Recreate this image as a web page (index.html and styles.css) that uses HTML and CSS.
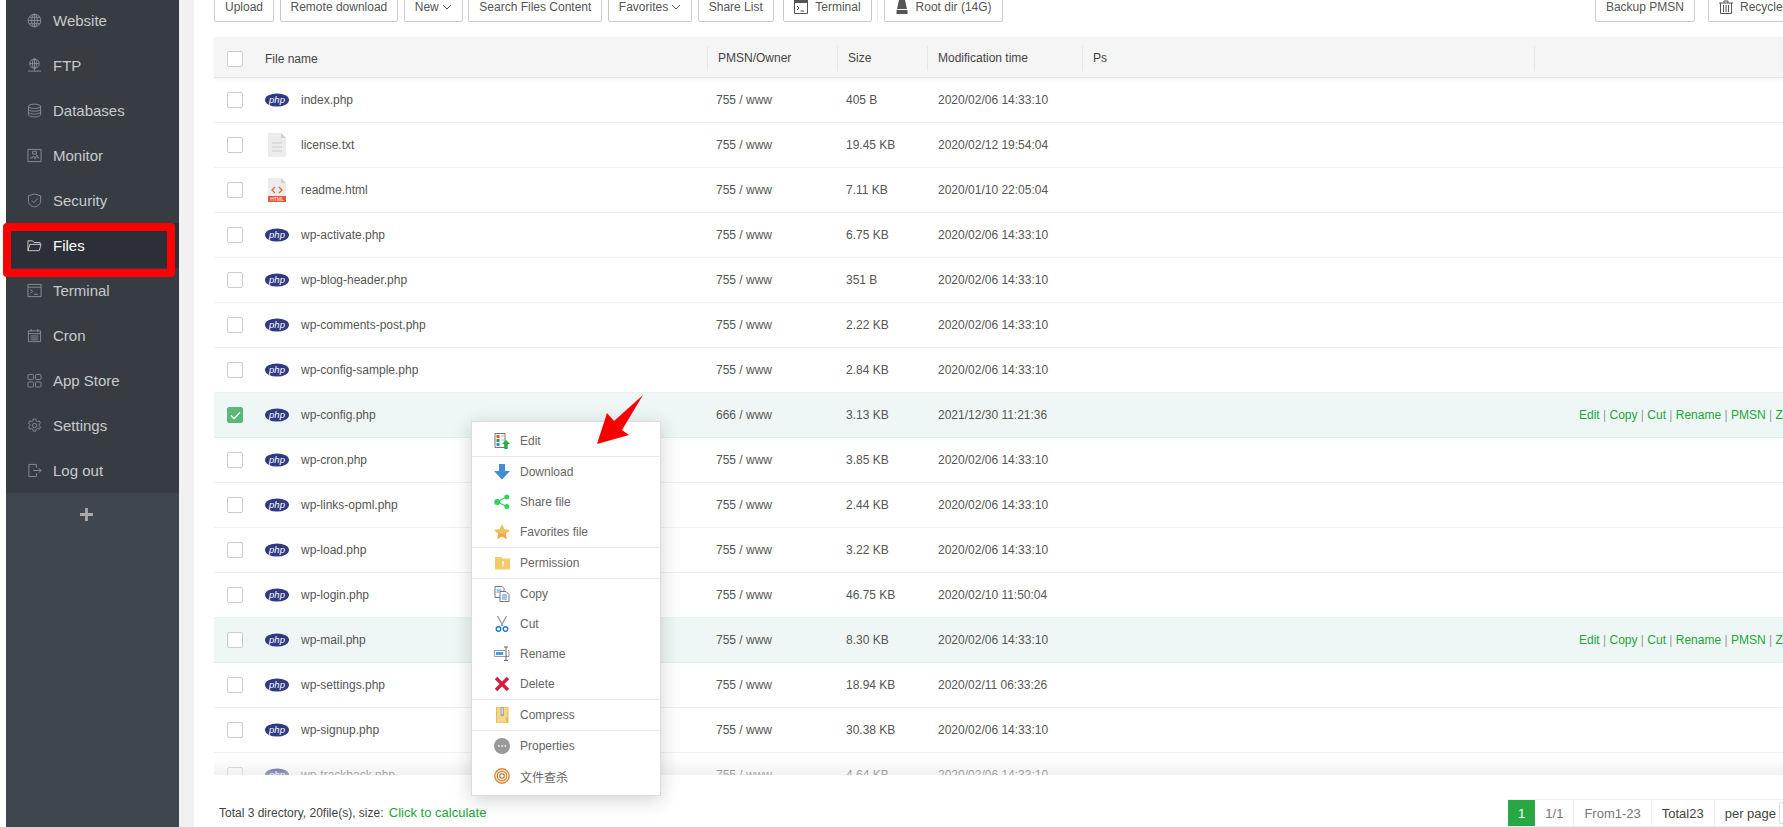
FILE: index.html
```html
<!DOCTYPE html>
<html lang="en">
<head>
<meta charset="utf-8">
<title>Files</title>
<link rel="stylesheet" href="styles.css">
</head>
<body>
<svg class="sprite" aria-hidden="true">
  <symbol id="php" viewBox="0 0 24 14">
    <ellipse cx="12" cy="7" rx="12" ry="6.6" fill="#2f3a80"/>
    <text x="12" y="10" text-anchor="middle" font-family="Liberation Sans" font-size="9.5" font-style="italic" fill="#fff">php</text>
  </symbol>
  <symbol id="txt" viewBox="0 0 18 24">
    <path d="M0 0h13l5 5v19H0z" fill="#ececec"/><path d="M13 0l5 5h-5z" fill="#cfcfcf"/>
    <path d="M4 10h10M4 14h10M4 18h10" stroke="#d6d6d6" stroke-width="1.3"/>
  </symbol>
  <symbol id="html" viewBox="0 0 18 24">
    <path d="M0 0h13l5 5v19H0z" fill="#ececec"/><path d="M13 0l5 5h-5z" fill="#cfcfcf"/>
    <path d="M7 9l-3 3 3 3M11 9l3 3-3 3" fill="none" stroke="#e8643c" stroke-width="1.3"/>
    <path d="M0 18h18v6H0z" fill="#e8553a"/>
    <text x="9" y="23" text-anchor="middle" font-family="Liberation Sans" font-size="5" fill="#fff">HTML</text>
  </symbol>
</svg>

<div class="gutter"></div>

<nav class="sidebar">
  <ul class="menu">
    <li class="menu-item"><svg class="nav-ico" viewBox="0 0 16 16"><circle cx="8" cy="8" r="6.7"/><ellipse cx="8" cy="8" rx="3" ry="6.7"/><path d="M1.3 8h13.4M2.3 4.600h11.400M2.300 11.400h11.400M8 1.300v13.400"/></svg>Website</li>
    <li class="menu-item"><svg class="nav-ico" viewBox="0 0 16 16"><circle cx="8" cy="6" r="5"/><ellipse cx="8" cy="6" rx="2.2" ry="5"/><path d="M3 6h10M8 1v10M8 11v2.500M1 14h14"/></svg>FTP</li>
    <li class="menu-item"><svg class="nav-ico" viewBox="0 0 16 16"><ellipse cx="8" cy="3.500" rx="6.500" ry="2.300"/><path d="M1.500 3.500v9c0 1.300 2.900 2.300 6.500 2.300s6.500-1 6.500-2.300v-9M1.500 6.500c0 1.300 2.900 2.300 6.500 2.300s6.500-1 6.500-2.300M1.500 9.500c0 1.300 2.900 2.300 6.500 2.300s6.500-1 6.500-2.300"/></svg>Databases</li>
    <li class="menu-item"><svg class="nav-ico" viewBox="0 0 16 16"><path d="M1 1.500h14v13H1zM3 10.500h2.500l1.500-2 1.500 3 2-4 1 3H13M6 3.500h4v3H6z"/></svg>Monitor</li>
    <li class="menu-item"><svg class="nav-ico" viewBox="0 0 16 16"><path d="M8 1l6.500 2v6c0 3-3 5-6.500 6-3.500-1-6.500-3-6.500-6V3zM5 8l2.300 2.300L11.300 6"/></svg>Security</li>
    <li class="menu-item menu-active"><svg class="nav-ico nav-ico-on" viewBox="0 0 16 16"><path d="M1 13.500V3h5l1.500 1.800H14v2M1 13.500l2-6.700h12l-2 6.700z"/></svg>Files</li>
    <li class="menu-item"><svg class="nav-ico" viewBox="0 0 16 16"><path d="M1 1.500h14v13H1zM1 4.500h14M3.500 7l2.500 2-2.500 2M7.500 12h4"/></svg>Terminal</li>
    <li class="menu-item"><svg class="nav-ico" viewBox="0 0 16 16"><path d="M1.500 3h13v11.500h-13zM1.500 6h13M4.500 1v3M11.500 1v3M4 8.500h8M4 10.500h8M4 12.500h8"/></svg>Cron</li>
    <li class="menu-item"><svg class="nav-ico" viewBox="0 0 16 16"><rect x="1" y="1.500" width="6" height="5.500" rx="1.300"/><rect x="9" y="1.500" width="6" height="5.500" rx="1.300"/><rect x="1" y="9.500" width="6" height="5.500" rx="1.300"/><rect x="9" y="9.500" width="6" height="5.500" rx="1.300"/></svg>App Store</li>
    <li class="menu-item"><svg class="nav-ico" viewBox="0 0 16 16"><circle cx="8" cy="8" r="2.300"/><path d="M6.700 1h2.600l.4 2 1.500.8 1.900-.7 1.300 2.300-1.500 1.300v1.600l1.500 1.300-1.300 2.300-1.900-.7-1.500.8-.4 2H6.700l-.4-2-1.500-.8-1.900.7-1.300-2.300 1.500-1.300V7.100L1.600 5.400l1.300-2.300 1.900.7 1.500-.8z"/></svg>Settings</li>
    <li class="menu-item"><svg class="nav-ico" viewBox="0 0 16 16"><path d="M10 1.500H2v13h8M10 5v-3.500M10 14.500V11M6.500 8H15M12.500 5.500L15 8l-2.500 2.500"/></svg>Log out</li>
  </ul>
  <div class="add-row">
    <svg class="add-ico" viewBox="0 0 14 14"><path d="M0 7h14M7 0v14"/></svg>
  </div>
</nav>

<main class="content">
  <section class="panel">
    <div class="toolbar">
      <button class="btn">Upload</button>
      <button class="btn">Remote download</button>
      <button class="btn">New <svg class="caret" viewBox="0 0 10 6"><path d="M1 1l4 4 4-4"/></svg></button>
      <button class="btn">Search Files Content</button>
      <button class="btn">Favorites <svg class="caret" viewBox="0 0 10 6"><path d="M1 1l4 4 4-4"/></svg></button>
      <button class="btn">Share List</button>
      <button class="btn btn-term"><svg class="btn-ico" viewBox="0 0 14 14"><path class="ico-fill" d="M0 0h14v3H0z"/><path class="ico-line" d="M.5 3v10.500h13V3M3 6l2 2-2 2M6.500 11H10"/></svg>Terminal</button>
      <span class="tool-sep"></span>
      <button class="btn"><svg class="btn-ico" viewBox="0 0 14 14"><path class="ico-fill" d="M4 0h6l2 9H2zM1.500 10h11v4h-11z"/></svg>Root dir (14G)</button>
      <button class="btn btn-right">Backup PMSN</button>
      <button class="btn btn-recycle"><svg class="btn-ico" viewBox="0 0 14 14"><path class="ico-line" d="M0 3h14M5 3V1h4v2M1.500 3v10.500h11V3M4.500 5v7M7 5v7M9.500 5v7"/></svg>Recycle bin</button>
    </div>

    <div class="thead">
      <div class="cell-check"><span class="check"></span></div>
      <div class="th-name">File name</div>
      <div class="th">PMSN/Owner</div>
      <div class="th">Size</div>
      <div class="th">Modification time</div>
      <div class="th">Ps</div>
      <div class="th"></div>
    </div>

    <div class="tbody">
      <div class="row"><div class="cell-check"><span class="check"></span></div><div class="name"><svg class="ficon"><use href="#php"/></svg>index.php</div><div class="td">755 / www</div><div class="td">405 B</div><div class="td td-date">2020/02/06 14:33:10</div><div class="td"></div><div class="td"></div></div>
      <div class="row"><div class="cell-check"><span class="check"></span></div><div class="name"><svg class="ficon"><use href="#txt"/></svg>license.txt</div><div class="td">755 / www</div><div class="td">19.45 KB</div><div class="td td-date">2020/02/12 19:54:04</div><div class="td"></div><div class="td"></div></div>
      <div class="row"><div class="cell-check"><span class="check"></span></div><div class="name"><svg class="ficon"><use href="#html"/></svg>readme.html</div><div class="td">755 / www</div><div class="td">7.11 KB</div><div class="td td-date">2020/01/10 22:05:04</div><div class="td"></div><div class="td"></div></div>
      <div class="row"><div class="cell-check"><span class="check"></span></div><div class="name"><svg class="ficon"><use href="#php"/></svg>wp-activate.php</div><div class="td">755 / www</div><div class="td">6.75 KB</div><div class="td td-date">2020/02/06 14:33:10</div><div class="td"></div><div class="td"></div></div>
      <div class="row"><div class="cell-check"><span class="check"></span></div><div class="name"><svg class="ficon"><use href="#php"/></svg>wp-blog-header.php</div><div class="td">755 / www</div><div class="td">351 B</div><div class="td td-date">2020/02/06 14:33:10</div><div class="td"></div><div class="td"></div></div>
      <div class="row"><div class="cell-check"><span class="check"></span></div><div class="name"><svg class="ficon"><use href="#php"/></svg>wp-comments-post.php</div><div class="td">755 / www</div><div class="td">2.22 KB</div><div class="td td-date">2020/02/06 14:33:10</div><div class="td"></div><div class="td"></div></div>
      <div class="row"><div class="cell-check"><span class="check"></span></div><div class="name"><svg class="ficon"><use href="#php"/></svg>wp-config-sample.php</div><div class="td">755 / www</div><div class="td">2.84 KB</div><div class="td td-date">2020/02/06 14:33:10</div><div class="td"></div><div class="td"></div></div>
      <div class="row row-on"><div class="cell-check"><span class="check check-on"><svg class="tick" viewBox="0 0 12 10"><path d="M1 5l3.500 3.500L11 1.500"/></svg></span></div><div class="name"><svg class="ficon"><use href="#php"/></svg>wp-config.php</div><div class="td">666 / www</div><div class="td">3.13 KB</div><div class="td td-date">2021/12/30 11:21:36</div><div class="td"></div><div class="acts"><a>Edit</a> | <a>Copy</a> | <a>Cut</a> | <a>Rename</a> | <a>PMSN</a> | <a>Zip</a></div></div>
      <div class="row"><div class="cell-check"><span class="check"></span></div><div class="name"><svg class="ficon"><use href="#php"/></svg>wp-cron.php</div><div class="td">755 / www</div><div class="td">3.85 KB</div><div class="td td-date">2020/02/06 14:33:10</div><div class="td"></div><div class="td"></div></div>
      <div class="row"><div class="cell-check"><span class="check"></span></div><div class="name"><svg class="ficon"><use href="#php"/></svg>wp-links-opml.php</div><div class="td">755 / www</div><div class="td">2.44 KB</div><div class="td td-date">2020/02/06 14:33:10</div><div class="td"></div><div class="td"></div></div>
      <div class="row"><div class="cell-check"><span class="check"></span></div><div class="name"><svg class="ficon"><use href="#php"/></svg>wp-load.php</div><div class="td">755 / www</div><div class="td">3.22 KB</div><div class="td td-date">2020/02/06 14:33:10</div><div class="td"></div><div class="td"></div></div>
      <div class="row"><div class="cell-check"><span class="check"></span></div><div class="name"><svg class="ficon"><use href="#php"/></svg>wp-login.php</div><div class="td">755 / www</div><div class="td">46.75 KB</div><div class="td td-date">2020/02/10 11:50:04</div><div class="td"></div><div class="td"></div></div>
      <div class="row row-on"><div class="cell-check"><span class="check"></span></div><div class="name"><svg class="ficon"><use href="#php"/></svg>wp-mail.php</div><div class="td">755 / www</div><div class="td">8.30 KB</div><div class="td td-date">2020/02/06 14:33:10</div><div class="td"></div><div class="acts"><a>Edit</a> | <a>Copy</a> | <a>Cut</a> | <a>Rename</a> | <a>PMSN</a> | <a>Zip</a></div></div>
      <div class="row"><div class="cell-check"><span class="check"></span></div><div class="name"><svg class="ficon"><use href="#php"/></svg>wp-settings.php</div><div class="td">755 / www</div><div class="td">18.94 KB</div><div class="td td-date">2020/02/11 06:33:26</div><div class="td"></div><div class="td"></div></div>
      <div class="row"><div class="cell-check"><span class="check"></span></div><div class="name"><svg class="ficon"><use href="#php"/></svg>wp-signup.php</div><div class="td">755 / www</div><div class="td">30.38 KB</div><div class="td td-date">2020/02/06 14:33:10</div><div class="td"></div><div class="td"></div></div>
      <div class="row"><div class="cell-check"><span class="check"></span></div><div class="name"><svg class="ficon"><use href="#php"/></svg>wp-trackback.php</div><div class="td">755 / www</div><div class="td">4.64 KB</div><div class="td td-date">2020/02/06 14:33:10</div><div class="td"></div><div class="td"></div></div>
    </div>

    <footer class="foot">
      <div class="summary">Total 3 directory, 20file(s), size: <a class="calc">Click to calculate</a></div>
      <div class="pager">
        <span class="page page-cur">1</span>
        <span class="page">1/1</span>
        <span class="page">From1-23</span>
        <span class="page page-dark">Total23</span>
        <span class="page page-dark page-last">per page <span class="per-box"></span></span>
      </div>
    </footer>
  </section>
</main>

<div class="ctx">
  <div class="ctx-group">
    <div class="ctx-item"><svg class="ctx-ico" viewBox="0 0 16 16"><path d="M1 .5h10v14H1z" fill="#fff" stroke="#777"/><path d="M2.500 2h3v3h-3z" fill="#e8552d"/><path d="M2.500 6h3v3h-3z" fill="#26a644"/><path d="M2.500 10h3v3h-3z" fill="#2f8fd8"/><path d="M7 3h3M7 7h3" stroke="#bbb"/><path d="M12 7l4 4h-2.300v5h-3.400v-5H8z" fill="#1fb141"/></svg>Edit</div>
  </div>
  <div class="ctx-group">
    <div class="ctx-item"><svg class="ctx-ico" viewBox="0 0 16 16"><path d="M5 0h6v7h5l-8 8.500L0 7h5z" fill="#3f8fd8"/></svg>Download</div>
    <div class="ctx-item"><svg class="ctx-ico" viewBox="0 0 16 16"><path d="M3 8l10-5.500M3 8l10 4.500" stroke="#2fd45a" stroke-width="1.300"/><circle cx="3.200" cy="8" r="3" fill="#2fd45a"/><circle cx="12.800" cy="3" r="2.500" fill="#2fd45a"/><circle cx="12.800" cy="12.500" r="2.500" fill="#2fd45a"/></svg>Share file</div>
    <div class="ctx-item"><svg class="ctx-ico" viewBox="0 0 16 16"><path d="M8 .5l2.300 5 5.500.6-4.100 3.700 1.200 5.400L8 12.500l-4.900 2.700 1.200-5.400L.2 6.100l5.500-.6z" fill="#f5a24a"/><path d="M8 .5l2.300 5 5.500.6-4.100 3.700H4.300L.2 6.100l5.500-.6z" fill="#f0c05a"/></svg>Favorites file</div>
  </div>
  <div class="ctx-group">
    <div class="ctx-item"><svg class="ctx-ico" viewBox="0 0 16 16"><path d="M1 2h6l1.500 1.500H16v11H1z" fill="#f3cb6a"/><path d="M8 6.500h2v2H9.500v3h-1v-3H8z" fill="#fff"/></svg>Permission</div>
  </div>
  <div class="ctx-group">
    <div class="ctx-item"><svg class="ctx-ico" viewBox="0 0 16 16"><path d="M1 .5h7l2 2v9H1z" fill="#fff" stroke="#777"/><path d="M6 5.500h6l3 3v7H6z" fill="#fff" stroke="#777"/><path d="M8 9h5M8 11h5M8 13h5" stroke="#3f8fd8"/><path d="M2.500 4h5M2.500 6h3" stroke="#3f8fd8"/></svg>Copy</div>
    <div class="ctx-item"><svg class="ctx-ico" viewBox="0 0 16 16"><path d="M3.500 0l5.500 10M12.500 0L7 10" stroke="#999" stroke-width="1.300"/><circle cx="4.500" cy="13" r="2.300" fill="none" stroke="#1e7fd0" stroke-width="1.500"/><circle cx="11.500" cy="13" r="2.300" fill="none" stroke="#1e7fd0" stroke-width="1.500"/></svg>Cut</div>
    <div class="ctx-item"><svg class="ctx-ico" viewBox="0 0 16 16"><path d="M11 4.500H.5v6H15v-6h-1" fill="none" stroke="#999"/><path d="M2 6h7v3H2z" fill="#3fa2e8"/><path d="M10 1h4M12 1v13.500M10 14.500h4" fill="none" stroke="#666"/></svg>Rename</div>
    <div class="ctx-item"><svg class="ctx-ico" viewBox="0 0 16 16"><path d="M2 2l12 12M14 2L2 14" stroke="#d81e3c" stroke-width="3.400"/></svg>Delete</div>
  </div>
  <div class="ctx-group">
    <div class="ctx-item"><svg class="ctx-ico" viewBox="0 0 16 16"><path d="M2.500 0h11.500v16H2.500z" fill="#f3d888" stroke="#e8b94e"/><path d="M6.500 0h3.500v9H6.500z" fill="#a9a9a9"/><path d="M7.500 2h1.500M7.500 4h1.500M7.500 6h1.500" stroke="#fff"/><path d="M12 10h2v5.500h-2z" fill="#e8b94e"/></svg>Compress</div>
  </div>
  <div class="ctx-group ctx-last">
    <div class="ctx-item"><svg class="ctx-ico" viewBox="0 0 16 16"><circle cx="8" cy="8" r="8" fill="#999"/><path d="M4 8h1.500M7.300 8h1.500M10.600 8h1.500" stroke="#fff" stroke-width="1.500"/></svg>Properties</div>
    <div class="ctx-item"><svg class="ctx-ico ctx-ring" viewBox="0 0 16 16"><circle cx="8" cy="8" r="7.200"/><circle cx="8" cy="8" r="4.800"/><circle cx="8" cy="8" r="2.300"/></svg>文件查杀</div>
  </div>
</div>

<div class="highlight"></div>
<svg class="arrow" viewBox="0 0 60 60"><defs><linearGradient id="arrowfill" x1="0" y1="0" x2="1" y2="1"><stop offset="0" stop-color="#e00"/><stop offset="1" stop-color="#f00"/></linearGradient></defs><path d="M4 52L14 21l7 8L50 3 29 38l7 5z" fill="url(#arrowfill)"/></svg>
</body>
</html>
```

FILE: styles.css
```css
* { box-sizing: border-box; }

html, body { height: 100%; }

body {
  margin: 0;
  display: flex;
  height: 827px;
  overflow: hidden;
  background: #fff;
  font-family: "Liberation Sans", Arial, "Noto Sans CJK SC", sans-serif;
  font-size: 12px;
  color: #555;
}

.sprite { display: none; }

.gutter { flex: 0 0 6px; background: #fff; }

.sidebar {
  flex: 0 0 173px;
  background: #3f464d;
  display: flex;
  flex-direction: column;
}

.menu {
  list-style: none;
  margin: -2px 0 0;
  padding: 0;
  background: #363c42;
}

.menu-item {
  height: 45px;
  display: flex;
  align-items: center;
  padding-left: 21px;
  font-size: 15px;
  color: #c8cacc;
}

.menu-active { background: #2c2f38; color: #fff; }

.nav-ico {
  width: 15px;
  height: 15px;
  margin-right: 11px;
  fill: none;
  stroke: #8b8f93;
  stroke-width: 1;
  flex: none;
}

.nav-ico-on { stroke: #d0d0d0; }

.add-row {
  height: 42px;
  padding-right: 12px;
  display: flex;
  align-items: center;
  justify-content: center;
}

.add-ico { width: 13px; height: 13px; fill: none; stroke: #aaa; stroke-width: 3; }

.content {
  flex: 1;
  min-width: 0;
  background: #f1f1f1;
  padding-left: 15px;
}

.panel {
  width: 1640px;
  height: 827px;
  background: #fff;
  padding-left: 20px;
  display: flex;
  flex-direction: column;
}

.toolbar {
  display: flex;
  gap: 5.500px;
  height: 30px;
  margin-top: -8px;
  margin-bottom: 15px;
  flex: none;
}

.btn {
  height: 30px;
  padding: 0 10px;
  border: 1px solid #ccc;
  border-radius: 2px;
  background: #fff;
  font: inherit;
  color: #555;
  display: flex;
  align-items: center;
  white-space: nowrap;
}

.btn-term { margin-left: 4px; }
.btn-right { margin-left: auto; }
.btn-recycle { margin-left: 7.500px; margin-right: 21px; }

.tool-sep { width: 1px; background: #eee; }

.caret { width: 10px; height: 6px; margin-left: 3px; fill: none; stroke: #555; }

.btn-ico { width: 14px; height: 14px; margin-right: 7px; flex: none; }
.ico-fill { fill: #555; }
.ico-line { fill: none; stroke: #555; }

.thead, .row {
  display: grid;
  grid-template-columns: 51px 442px 130px 90px 155px 452px 1fr;
  flex: none;
}

.thead {
  height: 41px;
  padding-top: 3px;
  background: #f5f5f5;
  border-bottom: 1px solid #e4e4e4;
  align-items: center;
  color: #444;
  box-shadow: 0 2px 4px rgba(0, 0, 0, .04);
  position: relative;
  z-index: 1;
}

.cell-check { display: flex; align-items: center; padding-left: 13px; }

.check {
  width: 16px;
  height: 16px;
  border: 1px solid #ccc;
  border-radius: 2px;
  background: #fff;
  display: flex;
  align-items: center;
  justify-content: center;
}

.check-on { background: #5cb87a; border-color: #5cb87a; }

.tick { width: 11px; height: 9px; fill: none; stroke: #fff; stroke-width: 1.500; }

.th {
  height: 25px;
  line-height: 25px;
  padding-left: 10px;
  border-left: 1px solid #e6e6e6;
}

.tbody {
  flex: 1;
  min-height: 0;
  overflow: hidden;
  position: relative;
}

.tbody::after {
  content: "";
  position: absolute;
  left: 0;
  right: 0;
  bottom: 0;
  height: 18px;
  background: linear-gradient(rgba(255, 255, 255, 0), rgba(232, 232, 232, .6));
}

.row {
  height: 45px;
  border-bottom: 1px solid #f0f0f0;
  align-items: center;
}

.row-on { background: #eff7f6; border-bottom-color: #e2ecea; box-shadow: 0 -1px 0 #eaf1f0; }

.name { display: flex; align-items: center; }

.ficon { width: 24px; height: 24px; margin-right: 12px; flex: none; }

.td { padding-left: 9px; }
.td-date { padding-left: 11px; }

.acts { padding-left: 45px; white-space: nowrap; color: #999; }
.acts a, .calc { color: #20a53a; }

.foot {
  flex: 0 0 52px;
  display: flex;
  align-items: flex-end;
  justify-content: space-between;
  padding-left: 5px;
}

.summary { line-height: 28px; color: #444; }
.calc { margin-left: 2px; font-size: 13px; }

.pager { display: flex; height: 28px; border: 1px solid #eee; border-left: 0; font-size: 13px; }

.page {
  padding: 0 10px;
  display: flex;
  align-items: center;
  border-right: 1px solid #eee;
  color: #777;
  white-space: nowrap;
}

.page-cur { background: #28a745; color: #fff; border-right: 0; }
.page-dark { color: #444; }
.page-last { border-right: 0; }

.per-box {
  width: 44px;
  height: 22px;
  margin-left: 3px;
  border: 1px solid #ddd;
  border-radius: 2px;
}

.ctx {
  position: absolute;
  left: 471px;
  top: 421px;
  width: 190px;
  background: #fff;
  border: 1px solid #ddd;
  padding: 4px 0;
  box-shadow: 0 4px 18px rgba(0, 0, 0, .18);
  z-index: 3;
}

.ctx-group { border-bottom: 1px solid #eaeaea; }
.ctx-last { border-bottom: 0; }

.ctx-item {
  height: 30px;
  display: flex;
  align-items: center;
  padding-left: 22px;
  color: #666;
}

.ctx-ico { width: 16px; height: 16px; margin-right: 10px; flex: none; }

.ctx-ring { fill: none; stroke: #d68a3e; stroke-width: 1.400; }

.highlight {
  position: absolute;
  left: 3px;
  top: 223px;
  width: 172px;
  height: 54px;
  border: 8px solid #f00;
  border-radius: 4px;
  z-index: 4;
}

.arrow {
  position: absolute;
  left: 593px;
  top: 392px;
  width: 60px;
  height: 60px;
  z-index: 4;
}
```
